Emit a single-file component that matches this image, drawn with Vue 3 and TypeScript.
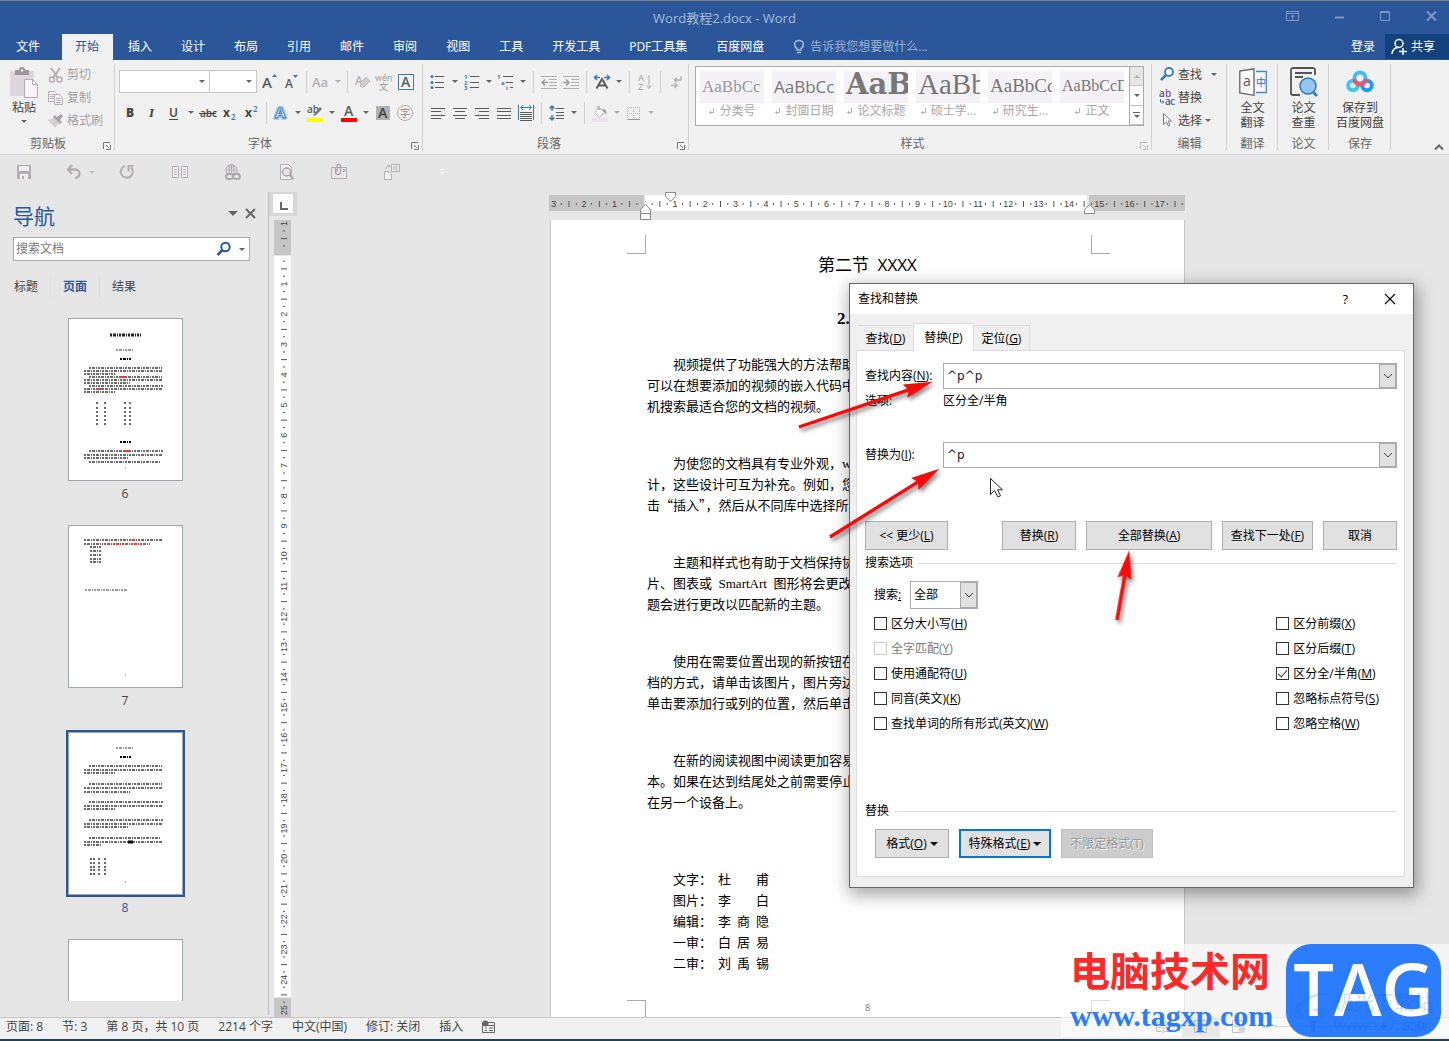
<script setup lang="ts">
import { ref } from 'vue'

interface Icon { w: number; h: number; body: string }
interface Tool { icon?: string; label?: string; kind?: 'arrow' | 'sep'; dim?: boolean }
type Stroke = [number, number, number, string?, number?]

const G = '#5b5b5b'
const D = '#b3afb3'
const B = '#3b78b5'
const lines = (rows: number[][], c: string) =>
  `<path d="${rows.map(([x1, x2, y]) => `M${x1} ${y}H${x2}`).join('')}" stroke="${c}" fill="none"/>`
const t = (x: number, y: number, s: number, c: string, txt: string, extra = '') =>
  `<text x="${x}" y="${y}" font-size="${s}" fill="${c}" font-family="Open Sans, Noto Sans CJK SC, sans-serif" ${extra}>${txt}</text>`

const icons: Record<string, Icon> = {
  paste: { w: 30, h: 32, body: `<path d="M1 4h24v25H1z" fill="#dbd7db"/><path d="M6 3h4a3 3 0 0 1 6 0h4v5H6z" fill="#9b979b"/><circle cx="13" cy="3.500" r="1.200" fill="#f1f1f1"/><path d="M15.500 12.500h8l5 5v13h-13z" fill="#f8f3fa" stroke="#b0acb0"/><path d="M23.500 12.500v5h5" fill="none" stroke="#b0acb0"/>` },
  cut: { w: 16, h: 16, body: `<g fill="none" stroke="${D}" stroke-width="2"><path d="M3 1l7 10M12 1L5 11"/><circle cx="4" cy="12.500" r="2.500" stroke-width="1.500"/><circle cx="11.500" cy="12.500" r="2.500" stroke-width="1.500"/></g>` },
  copy: { w: 16, h: 16, body: `<g fill="#f5f1f7" stroke="${D}"><path d="M.5 1.500h6l2 2v8h-8z"/><path d="M2 4.500h4M2 6.500h4M2 8.500h4" /><path d="M6.500 4.500h5l3 3v7h-8z"/><path d="M8 8.500h5M8 10.500h5M8 12.500h5"/></g>` },
  brush: { w: 16, h: 16, body: `<path d="M0 7l6-2 5 5-4 5z" fill="#d5d0d5"/><path d="M5 4l7 7 2-2-2-2 3-4-2-2-4 3-2-2z" fill="#a8a4a8"/>` },
  growA: { w: 16, h: 18, body: t(0, 15, 15, G, 'A', 'font-weight="600"') + `<path d="M10 4l2.500-3L15 4z" fill="${B}"/>` },
  shrinkA: { w: 16, h: 18, body: t(1, 15, 12, G, 'A', 'font-weight="600"') + `<path d="M9 2h5l-2.500 3z" fill="${B}"/>` },
  caseA: { w: 18, h: 18, body: t(0, 14, 13, D, 'Aa', 'font-weight="600"') },
  eraser: { w: 18, h: 18, body: t(2, 12, 12, D, 'A', 'font-weight="600"') + `<path d="M7 10l6-6 4 4-6 6H8z" fill="#cfcbcf" stroke="#bbb"/>` },
  wen: { w: 20, h: 20, body: t(1, 9, 9, '#9a969a', 'wén') + t(5, 18, 9, '#9a969a', '文') },
  boxA: { w: 18, h: 18, body: `<path d="M1.500 1.500h15v15h-15z" fill="#f6f6f6" stroke="${B}"/>` + t(4, 14, 14, G, 'A', 'font-weight="600"') },
  bold: { w: 16, h: 16, body: t(4, 12, 12, '#444', 'B', 'font-weight="800"') },
  italic: { w: 16, h: 16, body: `<text x="5" y="12" font-size="13" font-weight="700" font-style="italic" fill="#444" font-family="Liberation Serif, serif">I</text>` },
  under: { w: 16, h: 16, body: t(3, 12, 12, '#444', 'U', 'font-weight="600"') + `<path d="M3 14.500h9" stroke="#444"/>` },
  strike: { w: 18, h: 16, body: t(1, 12, 10, '#444', 'abc', 'font-weight="600"') + `<path d="M0 8.500h17" stroke="#444"/>` },
  sub: { w: 16, h: 16, body: t(1, 12, 12, '#444', 'x', 'font-weight="700"') + t(9, 15, 8, B, '2', 'font-weight="600"') },
  sup: { w: 16, h: 16, body: t(1, 12, 12, '#444', 'x', 'font-weight="700"') + t(9, 7, 8, B, '2', 'font-weight="600"') },
  glowA: { w: 18, h: 18, body: `<g stroke-linejoin="round">` + t(3, 14, 15, '#fff', 'A', 'font-weight="700" stroke="#a9cbea" stroke-width="4"') + t(3, 14, 15, '#fff', 'A', 'font-weight="700" stroke="#3b78b5" stroke-width="1"') + `</g>` },
  marker: { w: 18, h: 18, body: t(1, 9, 10, G, 'ab', 'font-weight="600"') + `<path d="M8 10l6-7 2 2-6 6zM7 12l1-2 2 1z" fill="#777"/><path d="M1 14h16v4H1z" fill="#ff0"/>` },
  redA: { w: 18, h: 18, body: t(4, 12, 14, G, 'A', 'font-weight="600"') + `<path d="M1 14h16v4H1z" fill="#f00"/>` },
  shadeA: { w: 18, h: 18, body: `<path d="M2 2h14v14H2z" fill="#b0b0b0"/>` + t(4, 14, 14, '#444', 'A', 'font-weight="600"') },
  ring: { w: 18, h: 18, body: `<circle cx="9" cy="9" r="7.500" fill="none" stroke="${D}"/>` + t(4, 13, 10, '#8a868a', '字') },
  bullets: { w: 16, h: 16, body: lines([[5, 14, 2.5], [5, 14, 8.5], [5, 14, 13.5]], G) + `<g fill="${B}"><circle cx="2" cy="2.500" r="1.500"/><circle cx="2" cy="8.500" r="1.500"/><circle cx="2" cy="13.500" r="1.500"/></g>` },
  numbers: { w: 16, h: 16, body: lines([[6, 15, 2.5], [6, 15, 8.5], [6, 15, 13.5]], G) + t(0, 5, 6, B, '1', 'font-weight="700"') + t(0, 11, 6, B, '2', 'font-weight="700"') + t(0, 16, 6, B, '3', 'font-weight="700"') },
  multi: { w: 18, h: 16, body: lines([[6, 16, 2.5], [9, 16, 8.5], [13, 16, 13.5]], G) + t(0, 5, 6, B, '1', 'font-weight="700"') + t(4, 11, 6, B, 'a', 'font-weight="700"') + t(9, 16, 6, B, 'i', 'font-weight="700"') },
  outdent: { w: 16, h: 16, body: lines([[0, 16, 2.5], [8, 16, 5.5], [8, 16, 8.5], [8, 16, 11.5], [0, 16, 14.5]], D) + `<path d="M7 8.500H2M4 5.500L1 8.500l3 3" fill="none" stroke="#9d999d" stroke-width="1.500"/>` },
  indent: { w: 16, h: 16, body: lines([[0, 16, 2.5], [8, 16, 5.5], [8, 16, 8.5], [8, 16, 11.5], [0, 16, 14.5]], D) + `<path d="M0 8.500h5M3 5.500l3 3-3 3" fill="none" stroke="#9d999d" stroke-width="1.500"/>` },
  scaleA: { w: 18, h: 16, body: `<path d="M7 3.500H2M4 1L1.500 3.500 4 6M11 3.500h5M14 1l2.500 2.500L14 6" fill="none" stroke="${B}" stroke-width="1.500"/><path d="M3.500 14.500L9 5l5.500 9.500M6 11.500h6" fill="none" stroke="${G}" stroke-width="2"/>` },
  sort: { w: 16, h: 16, body: t(1, 7, 9, D, 'A', 'font-weight="600"') + t(1, 16, 9, D, 'Z', 'font-weight="600"') + `<path d="M12 1v13M9.500 11.500L12 14.500l2.500-3" fill="none" stroke="${D}"/>` },
  pilcrow: { w: 14, h: 16, body: `<g fill="none" stroke="${D}" stroke-width="1.300"><path d="M12 2v4H6M8 3.500L5.500 6 8 8.500M2 11.500h6M5.500 9L8 11.500 5.500 14"/></g>` },
  alL: { w: 16, h: 16, body: lines([[1, 15, 3.5], [1, 11, 6.5], [1, 15, 10.5], [1, 11, 13.5]], G) },
  alC: { w: 16, h: 16, body: lines([[1, 15, 3.5], [3, 13, 6.5], [1, 15, 10.5], [3, 13, 13.5]], G) },
  alR: { w: 16, h: 16, body: lines([[1, 15, 3.5], [5, 15, 6.5], [1, 15, 10.5], [5, 15, 13.5]], G) },
  alJ: { w: 16, h: 16, body: lines([[1, 15, 3.5], [1, 15, 6.5], [1, 15, 10.5], [1, 15, 13.5]], G) },
  alD: { w: 18, h: 18, body: lines([[3, 15, 8.5], [3, 15, 10.5], [3, 15, 12.5], [3, 15, 14.5], [3, 15, 16.5]], G) + `<path d="M1.500 1v15M16.500 1v15M4 3.500h10M6 1L3.500 3.500 6 6M12 1l2.500 2.500L12 6" fill="none" stroke="${B}"/>` },
  spacing: { w: 18, h: 18, body: lines([[8, 16, 4.5], [8, 16, 8.5], [8, 16, 11.5], [8, 16, 14.5]], G) + `<path d="M4 2v5M4 11v5M1.500 4.500L4 2l2.500 2.500M1.500 13.500L4 16l2.500-2.500" fill="none" stroke="${B}" stroke-width="1.500"/>` },
  bucket: { w: 18, h: 18, body: `<path d="M1 14h16v4H1z" fill="#e8e2e8"/><path d="M8.500 3.500l5 5-5 5-5-5z" fill="#fff" stroke="${D}"/><path d="M6.500 6V2.500h2V6" fill="none" stroke="${D}"/><path d="M11 5c4 0 5 2 4 6-1-2-1-3-2-3z" fill="#9d999d"/>` },
  borders: { w: 16, h: 16, body: `<path d="M1.500 2v11M7.500 2v11M13.500 2v11M1 2.500h13M1 8.500h13" stroke="${D}" stroke-dasharray="1 1" fill="none"/><path d="M1 14.500h13" stroke="#999"/>` },
  find: { w: 16, h: 16, body: `<circle cx="10" cy="6" r="4" fill="#fff" stroke="${B}" stroke-width="1.800"/><path d="M7 9l-5 5" stroke="${B}" stroke-width="2.500"/>` },
  replace: { w: 18, h: 18, body: t(0, 8, 10, G, 'a', 'font-weight="600"') + t(6, 8, 10, '#8a4bb0', 'b', 'font-weight="600"') + t(6, 16, 10, G, 'a', 'font-weight="600"') + t(11, 16, 10, B, 'c', 'font-weight="600"') + `<path d="M1.500 10v3H5M3.500 11.500L5 13l-1.500 1.500" fill="none" stroke="${B}"/>` },
  pick: { w: 16, h: 16, body: `<path d="M4.500 1.500v11l3-2.500 2 4 1.500-1-2-4h3.500z" fill="#fff" stroke="#777"/>` },
  trans: { w: 28, h: 28, body: `<path d="M.8 3L15 .8v26.500L.8 25z" fill="#fafafa" stroke="#666" stroke-width="1.300"/><path d="M17 3.500h10.300v21H17" fill="#f7f9fc" stroke="#4a86d8" stroke-width="1.300"/>` + t(4, 18, 14, '#555', 'a') + t(17, 18, 10, '#4a86d8', '中', 'font-weight="500"') },
  check: { w: 28, h: 30, body: `<path d="M25 8V3a2 2 0 0 0-2-2H3a2 2 0 0 0-2 2v23a2 2 0 0 0 2 2h7" fill="none" stroke="#555" stroke-width="1.800"/><path d="M5 6h17M5 10h8" stroke="#555" stroke-width="1.800"/><circle cx="18" cy="19" r="8" fill="#93c5f5" stroke="#2b78b0" stroke-width="1.500"/><path d="M23 25l4 4" stroke="#2b78b0" stroke-width="2.500"/>` },
  cloud: { w: 28, h: 24, body: `<g fill="none" stroke-width="4"><circle cx="7" cy="15.500" r="4.800" stroke="#3fc8ee"/><circle cx="21" cy="15.500" r="4.800" stroke="#1e9bf0"/><circle cx="14" cy="8" r="5.500" stroke="#3fc0f0"/><path d="M8.500 9a5.500 5.500 0 0 0 11 0" stroke="#f3506e"/></g>` },
  save: { w: 18, h: 18, body: `<path d="M2 2h14v14H2z" fill="${D}"/><path d="M4 3h10v5H4zM5 11h8v5H5z" fill="#f1edf1"/><path d="M7 13h2v3H7z" fill="${D}"/>` },
  undo: { w: 18, h: 18, body: `<path d="M3 6.500h7c6 0 6 8 0 8.500M7 2L3 6.500 7 11" fill="none" stroke="${D}" stroke-width="2.300"/>` },
  redo: { w: 18, h: 18, body: `<path d="M7 3a6 6 0 1 0 6 1.500" fill="none" stroke="${D}" stroke-width="2"/><path d="M10 3h5.500M10.500 2.500v6" fill="none" stroke="${D}" stroke-width="2"/>` },
  pages: { w: 18, h: 18, body: `<path d="M1.500 3.500h6v11h-6zM10.500 3.500h6v11h-6z" fill="#f5f1f5" stroke="${D}"/><path d="M3 6.500h3M3 9h3M3 11.500h3M12 6.500h3M12 9h3M12 11.500h3" stroke="${D}"/>` },
  globe: { w: 18, h: 18, body: `<g fill="none" stroke="${D}"><circle cx="7.500" cy="7" r="5.500"/><path d="M2 7h11M7.500 1.500v11M4 3c3 2 4 2 7 0"/><ellipse cx="7.500" cy="7" rx="2.500" ry="5.500"/></g><g fill="#e6e6e6" stroke="#aaa6aa" stroke-width="1.800"><rect x="2" y="11" width="7" height="5" rx="2.500"/><rect x="9" y="11" width="7" height="5" rx="2.500"/></g>` },
  preview: { w: 18, h: 18, body: `<path d="M3.500 1.500h8l3 3v12h-11z" fill="#f2eef2" stroke="${D}"/><circle cx="9.500" cy="9" r="4" fill="#ebe7eb" stroke="#a8a4a8" stroke-width="1.500"/><path d="M12.500 12l4 4" stroke="#a8a4a8" stroke-width="2.200"/>` },
  mail: { w: 18, h: 18, body: `<path d="M1.500 4.500h15v11h-15z" fill="#ebe7eb" stroke="${D}"/><path d="M5.500 4v5a2.500 2.500 0 0 0 5 0V3a1.500 1.500 0 0 0-3.500 0v6" fill="none" stroke="#a8a4a8" stroke-width="1.200"/><path d="M13 6.500h2v2h-2" fill="none" stroke="${D}"/>` },
  share: { w: 18, h: 18, body: `<path d="M8.500 1.500h8v7h-8zM1.500 8.500h5l2 2v6h-7z" fill="#f2eef2" stroke="${D}"/><path d="M10 4h5M10 6h5M3 6c0-3 1-3 4-3M5.500 1.500L7 3 5.500 4.500" fill="none" stroke="${D}"/>` }
}

const tabs = ['开始', '插入', '设计', '布局', '引用', '邮件', '审阅', '视图', '工具', '开发工具', 'PDF工具集', '百度网盘']
const clip = [{ icon: 'cut', text: '剪切' }, { icon: 'copy', text: '复制' }, { icon: 'brush', text: '格式刷' }]
const i = (icon: string, label: string): Tool => ({ icon, label })
const arr: Tool = { kind: 'arrow' }
const arrDim: Tool = { kind: 'arrow', dim: true }
const sep: Tool = { kind: 'sep' }
const fontRow1: Tool[] = [i('growA', '增大字号'), i('shrinkA', '减小字号'), sep, i('caseA', '更改大小写'), arrDim, sep, i('eraser', '清除格式'), i('wen', '拼音指南'), i('boxA', '字符边框')]
const fontRow2: Tool[] = [i('bold', '加粗'), i('italic', '倾斜'), i('under', '下划线'), arr, i('strike', '删除线'), i('sub', '下标'), i('sup', '上标'), sep, i('glowA', '文本效果'), arr, i('marker', '突出显示'), arr, i('redA', '字体颜色'), arr, i('shadeA', '字符底纹'), i('ring', '带圈字符')]
const paraRow1: Tool[] = [i('bullets', '项目符号'), arr, i('numbers', '编号'), arr, i('multi', '多级列表'), arr, sep, i('outdent', '减少缩进'), i('indent', '增加缩进'), sep, i('scaleA', '中文版式'), arr, sep, i('sort', '排序'), sep, i('pilcrow', '编辑标记')]
const paraRow2: Tool[] = [i('alL', '左对齐'), i('alC', '居中'), i('alR', '右对齐'), i('alJ', '两端对齐'), i('alD', '分散对齐'), sep, i('spacing', '行距'), arr, sep, i('bucket', '底纹'), arrDim, i('borders', '边框'), arrDim]
const styles = [
  { name: '分类号', cls: 'thin', sample: 'AaBbCc' }, { name: '封面日期', cls: 'sans', sample: 'AaBbCc' }, { name: '论文标题', cls: 'huge', sample: 'AaB' },
  { name: '硕士学...', cls: 'large', sample: 'AaBb' }, { name: '研究生...', cls: 'mid', sample: 'AaBbCc' }, { name: '正文', cls: 'small', sample: 'AaBbCcD' }
]
const editing = [{ icon: 'find', text: '查找', arrow: true, far: true }, { icon: 'replace', text: '替换', arrow: false, far: false }, { icon: 'pick', text: '选择', arrow: true, far: false }]
const bigTools = [
  { icon: 'trans', text: ['全文', '翻译'], group: '翻译', wide: false },
  { icon: 'check', text: ['论文', '查重'], group: '论文', wide: false },
  { icon: 'cloud', text: ['保存到', '百度网盘'], group: '保存', wide: true }
]
const quick = ['redo', 'pages', 'globe', 'preview', 'mail', 'share']

const para = (y: number[], ends: number[], red?: Stroke[]): Stroke[] =>
  [...y.map((v, k): Stroke => [k % 3 === 0 ? 21 : 16, ends[k], v]), ...(red ?? [])]
const thumbs: { n: number; on: boolean; s: Stroke[] }[] = [
  { n: 6, on: false, s: [
    [42, 73, 17, '#222', 3], [48, 66, 32, '#999'], [52, 63, 41, '#000', 2],
    ...para([50, 53, 56, 59, 62, 65, 68, 71, 74], [94, 95, 47, 94, 95, 62, 95, 94, 47]),
    [51, 57, 59, '#f33'], [30, 39, 71, '#f33'],
    ...[85, 90, 94, 98, 102, 106].flatMap((y): Stroke[] => [[28, 31, y], [36, 39, y], [56, 59, y], [61, 64, y]]),
    [52, 63, 124, '#000', 2], ...para([133, 137, 140, 144], [95, 94, 60, 92]), [55, 61, 133, '#f33'], [57, 58, 150, '#888', 1]] },
  { n: 7, on: false, s: [
    [16, 95, 15], [61, 67, 15, '#f33'], [16, 35, 19], [36, 82, 19, '#f33'],
    ...[22, 26, 30, 34, 37].map((y): Stroke => [22, 33, y]), [17, 59, 65, '#999'], [57, 58, 150, '#888', 1]] },
  { n: 8, on: true, s: [
    [48, 66, 16, '#999'], [52, 63, 25, '#000', 2],
    ...para([34, 38, 41], [94, 95, 47]), ...para([52, 56, 60], [94, 95, 62]), ...para([70, 74, 77], [95, 94, 47]),
    ...para([88, 92, 95], [95, 94, 60]), ...para([106, 110, 113], [92, 95, 34]), [60, 65, 110, 'solid', 3],
    ...[127, 131, 135, 138, 142].flatMap((y): Stroke[] => [[22, 27, y], [30, 33, y], [36, 39, y]]), [57, 58, 150, '#888', 1]] }
]

const hTicks = Array.from({ length: 21 }, (_, k) => k - 3).map(n => ({ n, x: 644.7 + n * 30.3 }))
const vTicks = Array.from({ length: 27 }, (_, k) => k - 1).map(n => ({ n, y: 253.7 + n * 30.25 }))

const paragraphs = [
  ['视频提供了功能强大的方法帮助', '可以在想要添加的视频的嵌入代码中', '机搜索最适合您的文档的视频。'],
  ['为使您的文档具有专业外观，word', '计，这些设计可互为补充。例如，您', '击“插入”，然后从不同库中选择所'],
  ['主题和样式也有助于文档保持协', '片、图表或\u2002SmartArt\u2002图形将会更改', '题会进行更改以匹配新的主题。'],
  ['使用在需要位置出现的新按钮在', '档的方式，请单击该图片，图片旁边', '单击要添加行或列的位置，然后单击'],
  ['在新的阅读视图中阅读更加容易', '本。如果在达到结尾处之前需要停止', '在另一个设备上。']
].map(p => p.map(l => l.split(/(\u2002?[A-Za-z]+\u2002?)/).filter(Boolean)))
const isLatin = (s: string) => /[A-Za-z]/.test(s)
const credits = [['文字：', '杜甫'], ['图片：', '李白'], ['编辑：', '李商隐'], ['一审：', '白居易'], ['二审：', '刘禹锡']]

const findText = ref('^p^p')
const replaceText = ref('^p')
const scope = ref('全部')
const leftOpts = ref([
  { text: '区分大小写', key: 'H', on: false, off: false }, { text: '全字匹配', key: 'Y', on: false, off: true },
  { text: '使用通配符', key: 'U', on: false, off: false }, { text: '同音(英文)', key: 'K', on: false, off: false },
  { text: '查找单词的所有形式(英文)', key: 'W', on: false, off: false }
])
const rightOpts = ref([
  { text: '区分前缀', key: 'X', on: false, off: false }, { text: '区分后缀', key: 'T', on: false, off: false },
  { text: '区分全/半角', key: 'M', on: true, off: false }, { text: '忽略标点符号', key: 'S', on: false, off: false },
  { text: '忽略空格', key: 'W', on: false, off: false }
])
const status = ['页面: 8', '节: 3', '第 8 页，共 10 页', '2214 个字', '中文(中国)', '修订: 关闭', '插入']
</script>

<template>
  <div class="app">
    <header class="top">
      <div class="titlebar">
        <h1>Word教程2.docx - Word</h1>
        <div class="winbtns">
          <button aria-label="功能区显示选项"><svg width="14" height="12" viewBox="0 0 14 12"><path d="M.5 1.500h12v9H.5zM.5 3.500h12M6.500 10V5.500M4.500 7l2-2 2 2" fill="none" stroke="currentColor" /></svg></button>
          <button aria-label="最小化"><svg width="10" height="12" viewBox="0 0 10 12"><path d="M0 7.500h9" stroke="currentColor" stroke-width="2" /></svg></button>
          <button aria-label="最大化"><svg width="11" height="12" viewBox="0 0 11 12"><path d="M.5 1.500h9v9H.5zM.5 2.500h9" fill="none" stroke="currentColor" /></svg></button>
          <button aria-label="关闭"><svg width="11" height="12" viewBox="0 0 11 12"><path d="M1 1.500l9 9M10 1.500l-9 9" stroke="currentColor" stroke-width="2" /></svg></button>
        </div>
      </div>
      <nav class="tabs">
        <button class="file">文件</button>
        <button v-for="(name, k) in tabs" :key="name" :class="{ active: k === 0 }">{{ name }}</button>
        <label class="tell">
          <svg width="12" height="16" viewBox="0 0 12 16"><path d="M4 11V9.500C.5 7.500.5 1.500 6 1.500s5.500 6 2 8V11zM4 13.500h4" fill="none" stroke="#9fb6d8" stroke-width="1.500" /></svg>
          <span>告诉我您想要做什么...</span>
        </label>
        <button class="login">登录</button>
        <button class="share">
          <svg width="17" height="17" viewBox="0 0 17 17"><g fill="none" stroke="#fff" stroke-width="1.500"><circle cx="8" cy="5.500" r="4" /><path d="M1 16c0-4 3-6.500 6-6.500M8 13.500h8M12 10v7" /></g></svg>
          共享
        </button>
      </nav>
    </header>

    <section class="ribbon">
      <div class="group clipboard">
        <div class="body">
          <button class="paste">
            <svg width="30" height="32" viewBox="0 0 30 32" v-html="icons.paste.body" />
            <span>粘贴</span><i class="arrow" />
          </button>
          <div class="stack">
            <button v-for="c in clip" :key="c.text" class="line dim"><svg width="16" height="16" viewBox="0 0 16 16" v-html="icons[c.icon].body" />{{ c.text }}</button>
          </div>
        </div>
        <div class="caption">剪贴板<svg class="launch" width="8" height="8" viewBox="0 0 8 8"><path d="M.5 7V.5H7M3 3l3 3M7.500 3v4.500H3" fill="none" stroke="#777" /></svg></div>
      </div>

      <div class="group font">
        <div class="rows">
          <div class="row">
            <div class="combos">
              <label class="box name"><input aria-label="字体"><i class="arrow" /></label>
              <label class="box size"><input aria-label="字号"><i class="arrow" /></label>
            </div>
            <template v-for="(x, k) in fontRow1" :key="k">
              <i v-if="x.kind === 'sep'" class="sep" />
              <button v-else-if="x.kind === 'arrow'" class="drop" :class="{ faint: x.dim }" aria-label="更多"><i class="arrow" /></button>
              <button v-else class="tool" :aria-label="x.label"><svg :width="icons[x.icon!].w" :height="icons[x.icon!].h" v-html="icons[x.icon!].body" /></button>
            </template>
          </div>
          <div class="row">
            <template v-for="(x, k) in fontRow2" :key="k">
              <i v-if="x.kind === 'sep'" class="sep" />
              <button v-else-if="x.kind === 'arrow'" class="drop" :class="{ faint: x.dim }" aria-label="更多"><i class="arrow" /></button>
              <button v-else class="tool" :aria-label="x.label"><svg :width="icons[x.icon!].w" :height="icons[x.icon!].h" v-html="icons[x.icon!].body" /></button>
            </template>
          </div>
        </div>
        <div class="caption">字体<svg class="launch" width="8" height="8" viewBox="0 0 8 8"><path d="M.5 7V.5H7M3 3l3 3M7.500 3v4.500H3" fill="none" stroke="#777" /></svg></div>
      </div>

      <div class="group paragraph">
        <div class="rows">
          <div v-for="(r, n) in [paraRow1, paraRow2]" :key="n" class="row">
            <template v-for="(x, k) in r" :key="k">
              <i v-if="x.kind === 'sep'" class="sep" />
              <button v-else-if="x.kind === 'arrow'" class="drop" :class="{ faint: x.dim }" aria-label="更多"><i class="arrow" /></button>
              <button v-else class="tool" :aria-label="x.label"><svg :width="icons[x.icon!].w" :height="icons[x.icon!].h" v-html="icons[x.icon!].body" /></button>
            </template>
          </div>
        </div>
        <div class="caption">段落<svg class="launch" width="8" height="8" viewBox="0 0 8 8"><path d="M.5 7V.5H7M3 3l3 3M7.500 3v4.500H3" fill="none" stroke="#777" /></svg></div>
      </div>

      <div class="group styles">
        <div class="gallery">
          <div class="tiles">
            <button v-for="s in styles" :key="s.name" class="tile">
              <span class="sample" :class="s.cls">{{ s.sample }}</span>
              <span class="tname"><svg width="7" height="8" viewBox="0 0 7 8"><path d="M5.500 1v4.500H1.500M3 4L1.500 5.500 3 7" fill="none" stroke="#b5b1b5" /></svg>{{ s.name }}</span>
            </button>
          </div>
          <div class="scroll">
            <button class="off" aria-label="上一行"><i class="arrow up" /></button>
            <button aria-label="下一行"><i class="arrow" /></button>
            <button class="more" aria-label="其他"><i class="bar" /><i class="arrow" /></button>
          </div>
        </div>
        <div class="caption">样式<svg class="launch" width="8" height="8" viewBox="0 0 8 8"><path d="M.5 7V.5H7M3 3l3 3M7.500 3v4.500H3" fill="none" stroke="#bbb" /></svg></div>
      </div>

      <div class="group editing">
        <div class="body stack">
          <button v-for="e in editing" :key="e.text" class="line"><svg width="18" height="18" viewBox="0 0 18 18" v-html="icons[e.icon].body" />{{ e.text }}<i v-if="e.arrow" class="arrow" :class="{ far: e.far }" /></button>
        </div>
        <div class="caption">编辑</div>
      </div>

      <div v-for="b in bigTools" :key="b.group" class="group bigone" :class="{ wide: b.wide }">
        <button class="big">
          <span class="pic"><svg :width="icons[b.icon].w" :height="icons[b.icon].h" v-html="icons[b.icon].body" /></span>
          <span v-for="l in b.text" :key="l" class="bl">{{ l }}</span>
        </button>
        <div class="caption">{{ b.group }}</div>
      </div>
      <button class="fold" aria-label="折叠功能区"><svg width="10" height="7" viewBox="0 0 10 7"><path d="M1 5.500l4-4 4 4" fill="none" stroke="#666" stroke-width="2" /></svg></button>
    </section>

    <section class="quick">
      <button aria-label="保存"><svg width="18" height="18" v-html="icons.save.body" /></button>
      <button class="split" aria-label="撤销"><svg width="18" height="18" v-html="icons.undo.body" /><i class="arrow" /></button>
      <button v-for="q in quick" :key="q" :aria-label="q"><svg width="18" height="18" v-html="icons[q].body" /></button>
      <button class="custom" aria-label="自定义"><i class="bar" /><i class="arrow" /></button>
    </section>

    <main class="work">
      <aside class="nav">
        <div class="navhead">
          <h2>导航</h2>
          <i class="arrow wide" />
          <button aria-label="关闭导航"><svg width="11" height="11" viewBox="0 0 11 11"><path d="M1 1l9 9M10 1l-9 9" stroke="#666" stroke-width="2" /></svg></button>
        </div>
        <label class="search">
          <input placeholder="搜索文档" aria-label="搜索文档">
          <svg width="16" height="16" viewBox="0 0 16 16"><circle cx="9.500" cy="6" r="4.200" fill="none" stroke="#2b579a" stroke-width="2" /><path d="M6.500 9l-5 5" stroke="#2b579a" stroke-width="2.500" /></svg>
          <i class="arrow" />
        </label>
        <div class="navtabs"><button>标题</button><button class="active">页面</button><button>结果</button></div>
        <div class="thumbs">
          <figure v-for="p in thumbs" :key="p.n" :class="{ on: p.on }">
            <svg class="sheet" width="113" height="161" viewBox="1 1 113 161">
              <line v-for="(s, k) in p.s" :key="k" :x1="s[0]" :x2="s[1]" :y1="s[2]" :y2="s[2]" :stroke="s[3] === 'solid' ? '#000' : s[3] ?? '#6a6a6a'" :stroke-width="s[4] ?? 2" :stroke-dasharray="s[3] === 'solid' ? 'none' : '2 1 3 1 1 1'" />
            </svg>
            <figcaption>{{ p.n }}</figcaption>
          </figure>
          <figure><svg class="sheet" width="113" height="161" /></figure>
        </div>
      </aside>

      <svg class="vruler" width="28" height="827" viewBox="269 190 28 827">
        <path d="M269 192h28v24h-28z" fill="#d6d6d6" /><path d="M273 194h20v19h-20z" fill="#fdfdfd" />
        <path d="M281 202v7h7" fill="none" stroke="#666" stroke-width="2" />
        <path d="M274 220h17v35h-17zM274 998h17v19h-17z" fill="#c6c6c6" /><path d="M274 256h17v741h-17z" fill="#fff" />
        <g v-for="k in vTicks" :key="k.n">
          <text v-if="k.n" class="tick" :transform="`translate(287 ${k.y}) rotate(-90)`">{{ Math.abs(k.n) }}</text>
          <path v-if="k.n < 25" :d="`M283 ${k.y + 7.5}h2M281 ${k.y + 15.2}h6M283 ${k.y + 22.5}h2`" stroke="#555" />
        </g>
      </svg>

      <div class="canvas">
        <div class="column">
          <svg class="hruler" width="636" height="30" viewBox="549 190 636 30">
            <path d="M549 195h95v16h-95zM1089 195h96v16h-96z" fill="#c6c6c6" /><path d="M645 195h442v16H645z" fill="#fff" />
            <g v-for="k in hTicks" :key="k.n">
              <text v-if="k.n" class="tick" :x="k.x" y="207">{{ Math.abs(k.n) }}</text>
              <path :d="`M${k.x + 7.5} 203v2M${k.x + 15.2} 201v6M${k.x + 22.5} 203v2`" stroke="#555" />
            </g>
            <g fill="#fff" stroke="#8a8a8a"><path d="M665.500 192.500h10v4l-5 5-5-5z" /><path d="M640.500 213.500v-4l5-5 5 5v4zM640.500 213.500h10v6h-10z" /><path d="M1084.500 213.500v-4l5-5 5 5v4z" /></g>
          </svg>
          <article class="page">
            <i class="crop tl" /><i class="crop tr" /><i class="crop bl2" /><i class="crop br" />
            <h3>第二节&ensp;XXXX</h3>
            <h4>2.</h4>
            <p v-for="(p, k) in paragraphs" :key="k"><span v-for="(l, n) in p" :key="n" class="ln" :class="{ first: n === 0 }"><span v-for="(s, m) in l" :key="m" :class="{ latin: isLatin(s) }">{{ s }}</span></span></p>
            <dl>
              <div v-for="c in credits" :key="c[0]"><dt>{{ c[0] }}</dt><dd><span v-for="ch in c[1]" :key="ch">{{ ch }}</span></dd></div>
            </dl>
            <div class="pageno">8</div>
          </article>
        </div>
      </div>
    </main>

    <footer class="status">
      <span v-for="s in status" :key="s">{{ s }}</span>
      <svg width="14" height="14" viewBox="0 0 14 14"><path d="M.5 2.500h12v10H.5zM.5 5.500h12M3 8h2M3 10.500h2M7 8h4M7 10.500h4" fill="none" stroke="#666" /><circle cx="3.500" cy="3.500" r="3" fill="#666" /></svg>
      <div class="views">
        <svg width="14" height="14" viewBox="0 0 14 14"><path d="M.5 2.500h5l1.500 1 1.500-1h5v9h-5l-1.500 1-1.500-1h-5zM7 3v9M2 5h3M2 7.500h3M9 5h3M9 7.500h3" fill="none" stroke="#666" /></svg>
        <b><svg width="14" height="14" viewBox="0 0 14 14"><path d="M.5.5h12v12H.5zM3 4h7M3 6.500h7M3 9h7" fill="none" stroke="#555" /></svg></b>
        <svg width="14" height="14" viewBox="0 0 14 14"><path d="M.5.5h10v12H.5zM2 4h6M2 6.500h6" fill="none" stroke="#666" /><circle cx="10" cy="9.500" r="3.500" fill="#999" /></svg>
        <div class="slider"><button aria-label="缩小"><svg width="7" height="7" viewBox="0 0 7 7"><path d="M0 3.500h7" stroke="#444" stroke-width="2" /></svg></button><i class="track"><i /></i><button aria-label="放大"><svg width="7" height="7" viewBox="0 0 7 7"><path d="M0 3.500h7M3.500 0v7" stroke="#444" stroke-width="2" /></svg></button></div>
        <span class="zoom">80%</span>
      </div>
    </footer>

    <div class="dialog" role="dialog" aria-label="查找和替换">
      <div class="dtitle">
        <span>查找和替换</span>
        <button class="help" aria-label="帮助">?</button>
        <button aria-label="关闭对话框"><svg width="12" height="12" viewBox="0 0 12 12"><path d="M1 1l10 10M11 1L1 11" stroke="#000" stroke-width="1.200" /></svg></button>
      </div>
      <div class="dtabs"><button>查找(<u>D</u>)</button><button class="active">替换(<u>P</u>)</button><button>定位(<u>G</u>)</button></div>
      <div class="panel">
        <div class="field">
          <label for="find">查找内容(<u>N</u>):</label>
          <div class="combo"><input id="find" v-model="findText"><button aria-label="展开查找历史"><svg width="10" height="6" viewBox="0 0 10 6"><path d="M1 1l4 4 4-4" fill="none" stroke="#444" /></svg></button></div>
        </div>
        <div class="field note"><span class="lab">选项:</span><span>区分全/半角</span></div>
        <div class="field second">
          <label for="repl">替换为(<u>I</u>):</label>
          <div class="combo"><input id="repl" v-model="replaceText"><button aria-label="展开替换历史"><svg width="10" height="6" viewBox="0 0 10 6"><path d="M1 1l4 4 4-4" fill="none" stroke="#444" /></svg></button></div>
        </div>
        <div class="actions">
          <button class="less">&lt;&lt; 更少(<u>L</u>)</button>
          <button class="w74">替换(<u>R</u>)</button>
          <button class="all">全部替换(<u>A</u>)</button>
          <button class="next">查找下一处(<u>F</u>)</button>
          <button class="w74">取消</button>
        </div>
        <div class="legend">搜索选项<i /></div>
        <div class="scope">
          <label for="scope">搜索<u>:</u></label>
          <div class="combo"><select id="scope" v-model="scope"><option>全部</option><option>向上</option><option>向下</option></select><span class="chev"><svg width="10" height="6" viewBox="0 0 10 6"><path d="M1 1l4 4 4-4" fill="none" stroke="#444" /></svg></span></div>
        </div>
        <div class="opts">
          <div v-for="(col, n) in [leftOpts, rightOpts]" :key="n" class="optcol">
            <label v-for="o in col" :key="o.text" :class="{ off: o.off }"><input v-model="o.on" type="checkbox" :disabled="o.off"><span>{{ o.text }}(<u>{{ o.key }}</u>)</span></label>
          </div>
        </div>
        <div class="legend lower">替换<i /></div>
        <div class="formats">
          <button class="w74">格式(<u>O</u>)<i class="tri" /></button>
          <button class="w92 focus">特殊格式(<u>E</u>)<i class="tri" /></button>
          <button class="w92" disabled>不限定格式(T)</button>
        </div>
      </div>
      <svg class="notes" width="350" height="260" viewBox="790 370 350 260">
        <g fill="#f80a0a" stroke="none">
          <g v-for="a in [[799, 427, -18.7, 141], [830, 537, -32, 129], [1117, 620, -80, 71]]" :key="a[0]" :transform="`translate(${a[0]} ${a[1]}) rotate(${a[2]})`">
            <path :d="`M0 -1.700H${a[3] - 26}L${a[3] - 29} -7L${a[3]} 0L${a[3] - 29} 7L${a[3] - 26} 1.700H0z`" />
          </g>
        </g>
        <path d="M990.500 478.500v16l4-4 3.500 6.500 2.500-1.200-3-6h5z" fill="#fff" stroke="#223" />
      </svg>
    </div>

    <div class="mark">
      <div class="words"><strong>电脑技术网</strong><span>www.tagxp.com</span></div>
      <div class="logo">
        <b>TAG</b>
        <div class="ghost">
          <svg width="40" height="38" viewBox="0 0 50 44"><path d="M44 3C20 0 0 16 3 30c2 8 14 6 24 0-10 2-17 0-14-8C16 12 28 5 44 3zM20 40c14 0 24-8 22-16-1-6-12-4-18 0 8 0 10 2 8 7-2 4-6 7-12 9z" fill="#1a6be0" /></svg>
          <span>极光下载站<small>www.xz7.com</small></span>
        </div>
      </div>
    </div>
  </div>
</template>

<style>
body { margin: 0; }
</style>

<style scoped>
* { box-sizing: border-box; }
.app { position: relative; display: flex; flex-direction: column; height: 100vh; overflow: hidden; background: #e6e6e6; color: #444; font: 12px/16px "Open Sans", "Noto Sans CJK SC", sans-serif; }
button { margin: 0; padding: 0; border: 0; background: none; color: inherit; font: inherit; white-space: nowrap; }
input, select { margin: 0; padding: 0; border: 0; outline: 0; background: none; font: inherit; color: inherit; min-width: 0; }
svg { display: block; flex: none; }
h1, h2, h3, h4, p, dl, dd, figure { margin: 0; font-weight: 400; }
i { font-style: normal; }
.arrow { flex: none; width: 0; height: 0; border: 3px solid transparent; border-top-color: #666; border-bottom: 0; }
.arrow.up { border-top: 0; border-bottom: 3px solid #b5b1b5; }
.arrow.wide { border-width: 5px 5px 0; }
.faint .arrow { border-top-color: #b3afb3; }

.top { background: #2b579a; border-top: 1px solid #7f7f7f; color: #fff; }
.titlebar { position: relative; display: flex; height: 33px; align-items: center; justify-content: center; }
h1 { font-size: 13px; line-height: 16px; color: #a8bbd9; }
.winbtns { position: absolute; right: 12px; top: 9px; display: flex; gap: 35px; color: #7c98c6; }
.tabs { display: flex; height: 26px; gap: 1px; }
.tabs > button { padding: 0 14px; line-height: 22px; height: 26px; }
.tabs > .file { padding: 0 16px; margin-right: 5px; }
.tabs > .active { background: #f1f1f1; color: #2b579a; padding: 0 14px 0 13px; }
.tell { display: flex; gap: 5px; align-items: center; margin-left: 14px; color: #9fb3d4; flex: 1; }
.tabs > .login { padding: 0 9px; }
.tabs > .share { display: flex; gap: 3px; align-items: center; background: #12417c; width: 64px; height: 25px; padding: 0 6px; line-height: 20px; }

.ribbon { position: relative; display: flex; height: 95px; background: #f1f1f1; border-bottom: 1px solid #d2d2d2; }
.group { position: relative; display: flex; flex-direction: column; justify-content: space-between; }
.group::after { content: ""; position: absolute; right: 0; top: 4px; bottom: 4px; width: 1px; background: #d0d0d0; }
.caption { position: relative; height: 21px; line-height: 21px; text-align: center; color: #666; }
.launch { position: absolute; right: 4px; top: 9px; }
.clipboard { width: 115px; }
.clipboard .caption { padding-right: 19px; }
.body { display: flex; }
.paste { width: 48px; display: flex; flex-direction: column; align-items: center; padding-top: 7px; height: 68px; }
.paste span { line-height: 17px; height: 21px; }
.stack { flex-direction: column; padding-top: 3px; }
.line { display: flex; align-items: center; height: 23px; gap: 3px; }
.line.dim { color: #a6a2a6; }
.font { width: 308px; padding-left: 4px; }
.rows { padding-top: 6px; }
.row { display: flex; height: 31px; align-items: center; }
.combos { display: flex; margin-right: 2px; }
.box { display: flex; align-items: center; height: 23px; padding-right: 4px; background: #fff; border: 1px solid #c6c6c6; }
.box input { flex: 1; }
.name { width: 91px; }
.size { width: 47px; border-left: 0; }
.tool { width: 22px; height: 22px; display: flex; align-items: center; justify-content: center; }
.drop { width: 12px; height: 22px; display: flex; align-items: center; justify-content: center; }
.sep { width: 1px; height: 22px; margin: 0 3px; background: #d0d0d0; }
.paragraph { width: 266px; padding-left: 4px; }
.paragraph .sep { margin: 0 4px; }
.paragraph .caption { padding-right: 18px; }
.font .caption { padding-right: 22px; }
.styles { flex: 1; padding: 6px 8px 0 6px; }
.styles .caption { padding-right: 14px; }
.styles .launch { right: -4px; }
.gallery { display: flex; height: 60px; border: 1px solid #ababab; background: #fff; overflow: hidden; }
.tiles { display: flex; flex: 1; gap: 8px; padding: 4px; overflow: hidden; }
.tile { width: 64px; flex: none; display: flex; flex-direction: column; }
.sample { height: 32px; line-height: 32px; width: 64px; padding-left: 2px; overflow: hidden; background: #f5f2f7; color: #777; text-align: left; font-family: "Liberation Serif", serif; }
.thin { font-size: 17px; color: #999; }
.sans { font-family: "Open Sans", sans-serif; font-size: 17px; }
.huge { font-family: "DejaVu Serif", serif; font-size: 29px; font-weight: 700; line-height: 26px; }
.large { font-size: 29px; line-height: 26px; }
.mid { font-size: 19px; line-height: 30px; }
.small { font-size: 16px; line-height: 30px; }
.tname { display: flex; gap: 4px; align-items: center; justify-content: center; height: 16px; color: #aaa6aa; }
.scroll { display: flex; flex-direction: column; width: 14px; border-left: 1px solid #ababab; }
.scroll button { flex: 1; display: flex; flex-direction: column; align-items: center; justify-content: center; gap: 2px; border-bottom: 1px solid #c6c6c6; }
.scroll .off { background: #e6e6e6; }
.bar { width: 7px; height: 1px; background: #666; }
.editing { width: 75px; }
.editing .body { padding: 3px 0 0 7px; }
.editing .line { gap: 1px; }
.editing .arrow { margin-left: 2px; }
.editing .far { margin-left: 8px; }
.bigone { width: 51px; }
.bigone.wide { width: 62px; }
.big { display: flex; flex-direction: column; align-items: center; padding-top: 7px; }
.pic { height: 33px; display: flex; align-items: center; padding-bottom: 3px; }
.bl { line-height: 15px; }
.fold { margin: 0 5px 0 43px; align-self: flex-end; height: 14px; }

.quick { display: flex; align-items: center; gap: 35px; height: 35px; padding: 0 0 1px 15px; }
.split { display: flex; align-items: center; gap: 6px; margin: 0 -12px 0 -3px; }
.split .arrow { border-top-color: #c5c1c5; }
.custom { display: flex; flex-direction: column; gap: 2px; align-items: center; margin-left: 3px; }
.custom .bar { width: 5px; background: #f4f4f4; }
.custom .arrow { border-top-color: #f4f4f4; }

.work { display: flex; flex: 1; min-height: 0; }
.nav { display: flex; flex-direction: column; width: 269px; margin: 2px 0; padding: 8px 18px 14px 13px; border-right: 1px solid #c0c0c0; overflow: hidden; }
.navhead { display: flex; align-items: flex-start; gap: 6px; height: 37px; }
h2 { flex: 1; font-size: 21px; line-height: 32px; color: #2b579a; }
.navhead .arrow { margin-top: 11px; }
.navhead button { padding: 8px 0 0; margin-right: -6px; margin-left: 1px; }
.search { display: flex; align-items: center; gap: 7px; height: 24px; padding: 0 4px 0 2px; background: #fff; border: 1px solid #ababab; }
.search input { flex: 1; }
.search input::placeholder { color: #777; opacity: 1; }
.navtabs { display: flex; padding-top: 16px; height: 57px; }
.navtabs button { height: 20px; padding: 0 12px; border-right: 1px solid #dcdcdc; line-height: 20px; }
.navtabs button:first-child { padding-left: 1px; }
.navtabs button:last-child { border: 0; }
.navtabs .active { color: #2b579a; font-weight: 700; }
.thumbs { flex: 1; min-height: 0; overflow: hidden; display: flex; flex-direction: column; gap: 16px; padding-right: 13px; }
.thumbs figure { display: flex; flex-direction: column; align-items: center; height: 191px; flex: none; }
.sheet { box-sizing: content-box; background: #fff; border: 1px solid #a0a5ad; }
.on .sheet { outline: 2px solid #2b579a; }
.thumbs figcaption { line-height: 26px; }
.on figcaption { color: #2b579a; }
.vruler { overflow: hidden; }
.tick { font: 9px "Liberation Sans", sans-serif; fill: #444; text-anchor: middle; }
.canvas { flex: 1; display: flex; justify-content: center; padding-right: 12px; overflow: hidden; }
.column { display: flex; flex-direction: column; width: 636px; flex: none; }
.page { position: relative; flex: 1; margin-left: 1px; padding: 33px 96px 0 96px; background: #fff; border: solid #c6c6c6; border-width: 0 1px; color: #000; overflow: hidden; }
.crop { position: absolute; width: 19px; height: 19px; border: 0 solid #aaa; }
.tl { left: 76px; top: 15px; border-width: 0 1px 1px 0; }
.tr { right: 74px; top: 15px; border-width: 0 0 1px 1px; }
.bl2 { left: 76px; bottom: -2px; border-width: 1px 1px 0 0; }
.br { right: 74px; bottom: -2px; border-width: 1px 0 0 1px; }
h3 { text-align: center; font-size: 17px; line-height: 24px; }
h4 { margin: 30px 0 22px; padding-left: 190px; font: 700 17px/24px "Liberation Serif", serif; }
p, dl { font: 13px/21px "Noto Sans CJK SC", sans-serif; white-space: nowrap; }
p { margin-bottom: 36px; }
.ln { display: block; height: 21px; }
.latin { font-family: "Liberation Serif", serif; line-height: 16px; }
.first { padding-left: 26px; }
dl { padding: 20px 0 0 26px; }
dl div { display: flex; }
dt { width: 45px; }
dd { display: flex; width: 51px; justify-content: space-between; }
.pageno { margin-top: 27px; text-align: center; font-size: 9px; color: #777; }

.status { display: flex; align-items: center; gap: 19px; height: 24px; padding: 0 22px 4px 6px; background: #f1f1f1; border-top: 1px solid #c5c5c5; border-bottom: 2px solid #24404f; white-space: nowrap; }
.views { display: flex; align-items: center; gap: 12px; margin-left: auto; }
.views b { padding: 3px 12px; background: #c6c6c6; }
.slider { display: flex; align-items: center; gap: 4px; padding: 0 4px 0 5px; }
.track { display: flex; align-items: center; width: 102px; height: 1px; background: #999; }
.track i { width: 4px; height: 11px; margin-left: 37px; background: #444; }

.dialog { position: absolute; right: 35px; top: 283px; width: 565px; padding-bottom: 10px; background: #f0f0f0; border: 1px solid #666; box-shadow: 2px 5px 16px 2px rgba(0, 0, 0, .35); color: #000; }
.dtitle { display: flex; align-items: center; height: 30px; padding: 0 17px 0 8px; background: #fff; }
.dtitle span { flex: 1; }
.help { margin-right: 36px; font-size: 13px; }
.dtabs { display: flex; align-items: flex-end; padding: 9px 0 0 8px; height: 37px; }
.dtabs button { width: 56px; height: 26px; border: 1px solid #dcdcdc; border-width: 1px 1px 0 0; }
.dtabs .active { position: relative; width: 61px; height: 29px; margin: 0 0 -1px -1px; border-width: 1px 1px 0; background: #fff; }
.panel { margin: -1px 8px 0 6px; padding: 12px 7px 18px 8px; background: #fff; border: 1px solid #dcdcdc; }
.field { display: flex; align-items: center; }
.field label, .lab { width: 78px; }
.combo { flex: 1; display: flex; height: 26px; border: 1px solid #ababab; background: #fff; }
.combo input { flex: 1; padding-left: 3px; font: 12px "DejaVu Sans", sans-serif; color: #222; }
.combo button, .chev { display: flex; align-items: center; justify-content: center; width: 17px; background: #e1e1e1; border: 1px solid #ababab; }
.note { height: 24px; }
.second { margin-top: 29px; }
.actions { display: flex; gap: 10px; margin-top: 53px; }
.actions button, .formats button { height: 29px; background: #e1e1e1; border: 1px solid #adadad; }
.less { width: 83px; margin-right: auto; }
.w74 { width: 74px; }
.next { width: 91px; }
.w92 { width: 92px; }
.all { width: 126px; }
.legend { display: flex; align-items: center; gap: 5px; height: 26px; }
.legend i { flex: 1; height: 1px; background: #dcdcdc; }
.scope { display: flex; align-items: center; margin-top: 5px; padding-left: 9px; }
.scope label { width: 36px; }
.scope .combo { flex: none; width: 68px; height: 28px; }
.scope select { flex: 1; appearance: none; padding-left: 3px; }
.opts { display: flex; justify-content: space-between; margin-top: 2px; padding: 0 18px 0 9px; }
.optcol label { display: flex; align-items: center; gap: 4px; height: 25px; }
.optcol input { position: relative; appearance: none; width: 13px; height: 13px; border: 1px solid #333; background: #fff; }
.optcol input:checked::after { content: ""; position: absolute; left: 3px; top: 0; width: 4px; height: 8px; border: solid #333; border-width: 0 1px 1px 0; transform: rotate(40deg); }
.optcol .off { color: #7a7a7a; }
.optcol .off input { border-color: #ccc; }
.lower { margin-top: 62px; }
.formats { display: flex; gap: 10px; margin-top: 5px; padding-left: 10px; }
.formats .focus { border: 2px solid #0078d7; }
.formats button:disabled { background: #ccc; border-color: #bfbfbf; color: #9a9a9a; text-shadow: 1px 1px #eee; }
.tri { display: inline-block; margin: 0 0 2px 3px; border: 4px solid transparent; border-top-color: #000; border-bottom: 0; }
.notes { position: absolute; left: -60px; top: 86px; overflow: visible; pointer-events: none; }
.notes > g { filter: drop-shadow(2px 3px 2px rgba(0, 0, 0, .5)); }

.mark { position: absolute; right: 0; bottom: 4px; display: flex; gap: 10px; height: 93px; padding: 0 8px 0 9px; background: rgba(255, 255, 255, .6); }
.words { display: flex; flex-direction: column; width: 206px; white-space: nowrap; }
.words strong { font: 700 40px/50px "Noto Sans CJK SC", sans-serif; color: #f92a2a; }
.words span { font: 700 30px/44px "Liberation Serif", serif; color: #2a7cff; }
.logo { position: relative; display: flex; align-items: center; justify-content: center; width: 155px; border-radius: 25px; background: rgba(7, 103, 255, .85); }
.logo > b { padding-bottom: 6px; font: 600 72px/84px "Open Sans", sans-serif; color: #fff; }
.ghost { position: absolute; left: 6px; top: 46px; display: flex; gap: 2px; opacity: .2; color: #1a5fc0; }
.ghost span { font-size: 20px; line-height: 26px; white-space: nowrap; }
.ghost small { display: block; font-size: 15px; line-height: 16px; }
</style>
